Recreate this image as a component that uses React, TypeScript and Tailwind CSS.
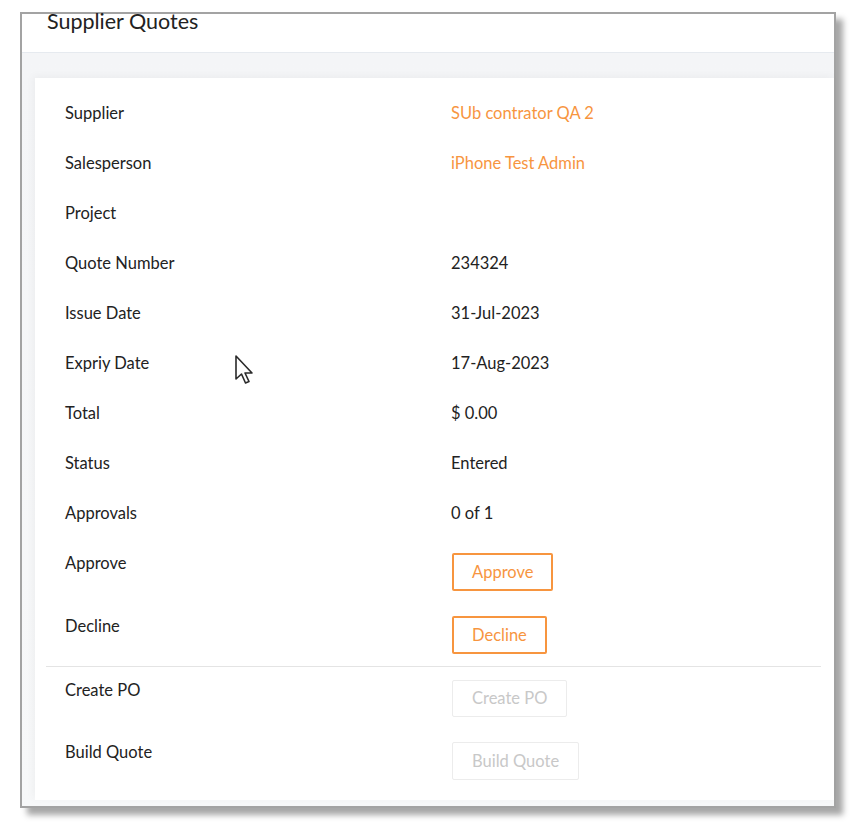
import React from 'react';

type Row = { label: string; value?: string; orange?: boolean };

const rows: Row[] = [
  { label: 'Supplier', value: 'SUb contrator QA 2', orange: true },
  { label: 'Salesperson', value: 'iPhone Test Admin', orange: true },
  { label: 'Project' },
  { label: 'Quote Number', value: '234324' },
  { label: 'Issue Date', value: '31-Jul-2023' },
  { label: 'Expriy Date', value: '17-Aug-2023' },
  { label: 'Total', value: '$ 0.00' },
  { label: 'Status', value: 'Entered' },
  { label: 'Approvals', value: '0 of 1' },
];

// Mouse pointer left over the page in the screenshot
function Pointer() {
  return (
    <svg className="absolute left-[233px] top-[353px]" width="22" height="32" viewBox="0 0 22 32">
      <path
        d="M3 3 L3 26 L8.5 21 L12.5 30 L16 28.5 L12 20 L19 20 Z"
        fill="#fff"
        stroke="#2a2a2a"
        strokeWidth="1.6"
        strokeLinejoin="round"
      />
    </svg>
  );
}

export default function App() {
  return (
    <div className="relative w-[855px] h-[837px] bg-white font-['Lato','Liberation_Sans',sans-serif] text-[#222]">
      <div className="absolute left-[20px] top-[12px] w-[816px] h-[796px] border-2 border-[#a3a3a3] bg-white shadow-[7px_7px_6px_rgba(0,0,0,0.35)] flex flex-col">
        {/* Header */}
        <div className="h-[39px] border-b border-[#e6eaef] pl-[25px] shrink-0">
          <h1 className="text-[21.5px] leading-[14px] text-[#222]">Supplier Quotes</h1>
        </div>

        {/* Body */}
        <div className="flex-1 bg-gradient-to-b from-[#f4f5f7] to-[#f7f8f9] pl-[13px] pt-[25px] pb-[6px] flex flex-col">
          <div className="flex-1 bg-white shadow-[-2px_-2px_8px_rgba(0,0,0,0.04)] pt-[10px]">
            <div className="pl-[30px]">
              {rows.map((r) => (
                <div key={r.label} className="flex items-center h-[50px] text-[16.5px]">
                  <div className="w-[386px]">{r.label}</div>
                  <div className={r.orange ? 'text-[#f7953f]' : 'text-[#222]'}>{r.value}</div>
                </div>
              ))}

              <div className="flex items-start mt-[15px] text-[16.5px]">
                <div className="w-[387px] leading-[20px]">Approve</div>
                <button className="h-[38px] px-[18px] border-2 border-[#f7953f] rounded-[2px] text-[#f7953f] text-[16.5px]">
                  Approve
                </button>
              </div>
              <div className="flex items-start mt-[25px] text-[16.5px]">
                <div className="w-[387px] leading-[20px]">Decline</div>
                <button className="h-[38px] px-[18px] border-2 border-[#f7953f] rounded-[2px] text-[#f7953f] text-[16.5px]">
                  Decline
                </button>
              </div>
            </div>

            <div className="ml-[11px] mr-[13px] mt-[12px] border-t border-[#e4e4e4]" />

            <div className="pl-[30px]">
              <div className="flex items-start mt-[13px] text-[16.5px]">
                <div className="w-[387px] leading-[20px]">Create PO</div>
                <button className="h-[37px] px-[19px] border border-[#ececec] rounded-[2px] text-[#c8c8c8] text-[16.5px]">
                  Create PO
                </button>
              </div>
              <div className="flex items-start mt-[25px] text-[16.5px]">
                <div className="w-[387px] leading-[20px]">Build Quote</div>
                <button className="h-[38px] px-[19px] border border-[#ececec] rounded-[2px] text-[#c8c8c8] text-[16.5px]">
                  Build Quote
                </button>
              </div>
            </div>
          </div>
        </div>
      </div>
      <Pointer />
    </div>
  );
}
